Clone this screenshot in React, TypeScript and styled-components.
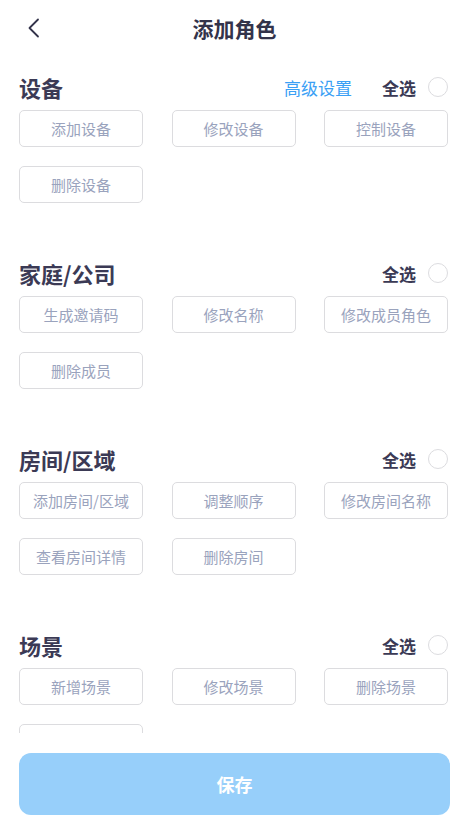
import styled, { createGlobalStyle } from "styled-components";

type Section = {
  title: string;
  advanced?: boolean;
  actions: string[];
};

const sections: Section[] = [
  {
    title: "设备",
    advanced: true,
    actions: ["添加设备", "修改设备", "控制设备", "删除设备"],
  },
  {
    title: "家庭/公司",
    actions: ["生成邀请码", "修改名称", "修改成员角色", "删除成员"],
  },
  {
    title: "房间/区域",
    actions: ["添加房间/区域", "调整顺序", "修改房间名称", "查看房间详情", "删除房间"],
  },
  {
    title: "场景",
    actions: ["新增场景", "修改场景", "删除场景", "查看场景"],
  },
];

const App = () => {
  return (
    <>
      <GlobalStyle />
      <Page>
        <Header>
          <BackButton aria-label="返回">
            <svg width="14" height="20" viewBox="0 0 14 20" fill="none">
              <polyline
                points="11,1.5 2.5,10 11,18.5"
                stroke="#33334a"
                strokeWidth="1.8"
                strokeLinecap="round"
                strokeLinejoin="round"
              />
            </svg>
          </BackButton>
          <HeaderTitle>添加角色</HeaderTitle>
        </Header>
        <Content>
          {sections.map((section) => (
            <SectionBlock key={section.title}>
              <SectionHead>
                <SectionTitle>{section.title}</SectionTitle>
                <HeadActions>
                  {section.advanced && <AdvancedLink>高级设置</AdvancedLink>}
                  <SelectAll>全选</SelectAll>
                  <Radio />
                </HeadActions>
              </SectionHead>
              <ChipGrid>
                {section.actions.map((action) => (
                  <Chip key={action}>{action}</Chip>
                ))}
              </ChipGrid>
            </SectionBlock>
          ))}
        </Content>
        <Footer>
          <SaveButton>保存</SaveButton>
        </Footer>
      </Page>
    </>
  );
};

const GlobalStyle = createGlobalStyle`
  html, body {
    margin: 0;
    padding: 0;
    background: #ffffff;
  }
  body {
    font-family: "Noto Sans CJK SC", "Noto Sans", sans-serif;
  }
  * {
    box-sizing: border-box;
  }
`;

const Page = styled.div`
  display: flex;
  flex-direction: column;
  width: 100%;
  height: 100vh;
  overflow: hidden;
  background: #ffffff;
`;

const Header = styled.header`
  position: relative;
  display: flex;
  align-items: center;
  justify-content: center;
  height: 56px;
  flex-shrink: 0;
`;

const BackButton = styled.button`
  position: absolute;
  left: 20px;
  top: 14px;
  width: 28px;
  height: 28px;
  display: flex;
  align-items: center;
  justify-content: center;
  padding: 0;
  border: none;
  background: transparent;
`;

const HeaderTitle = styled.h1`
  margin: 0;
  font-size: 21px;
  font-weight: 700;
  color: #33334a;
`;

const Content = styled.main`
  flex: 1;
  overflow: hidden;
  padding: 15px 21px 0 19px;
  display: flex;
  flex-direction: column;
  gap: 54px;
`;

const SectionBlock = styled.section`
  display: flex;
  flex-direction: column;
  gap: 7px;
`;

const SectionHead = styled.div`
  display: flex;
  align-items: center;
  justify-content: space-between;
  height: 32px;
`;

const SectionTitle = styled.h2`
  margin: 0;
  font-size: 22px;
  font-weight: 700;
  color: #3b3a55;
`;

const HeadActions = styled.div`
  display: flex;
  align-items: center;
`;

const AdvancedLink = styled.span`
  font-size: 17px;
  color: #3aa0f5;
  margin-right: 30px;
`;

const SelectAll = styled.span`
  font-size: 17px;
  font-weight: 700;
  color: #3b3a55;
  margin-right: 12px;
`;

const Radio = styled.span`
  width: 20px;
  height: 20px;
  border-radius: 50%;
  border: 1.5px solid #dcdcdf;
  background: #ffffff;
`;

const ChipGrid = styled.div`
  display: grid;
  grid-template-columns: repeat(3, 124px);
  column-gap: 28.5px;
  row-gap: 19px;
`;

const Chip = styled.div`
  height: 37px;
  display: flex;
  align-items: center;
  justify-content: center;
  border: 1px solid #dcdcdf;
  border-radius: 5px;
  font-size: 15px;
  color: #9aa3bd;
  white-space: nowrap;
`;

const Footer = styled.footer`
  flex-shrink: 0;
  height: 101px;
  padding: 20px 19px 19px 19px;
  background: #ffffff;
`;

const SaveButton = styled.button`
  width: 100%;
  height: 62px;
  border: none;
  border-radius: 12px;
  background: #97cffa;
  color: #ffffff;
  font-family: inherit;
  font-size: 18px;
  font-weight: 700;
`;

export default App;
